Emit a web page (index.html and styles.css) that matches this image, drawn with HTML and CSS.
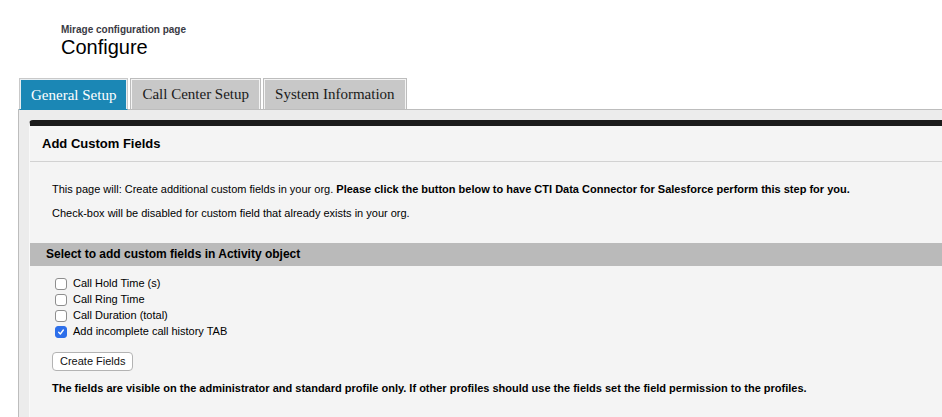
FILE: index.html
```html
<!DOCTYPE html>
<html lang="en">
<head>
<meta charset="utf-8">
<title>Configure</title>
<link rel="stylesheet" href="styles.css">
</head>
<body>
<header class="page-header">
  <div class="page-sub">Mirage configuration page</div>
  <h1 class="page-title">Configure</h1>
</header>
<nav class="tabs">
  <div class="tab tab-active">General Setup</div>
  <div class="tab">Call Center Setup</div>
  <div class="tab">System Information</div>
</nav>
<main class="panel">
  <section class="box">
    <h2 class="box-head">Add Custom Fields</h2>
    <div class="box-body">
      <p class="intro">This page will: Create additional custom fields in your org. <b>Please click the button below to have CTI Data Connector for Salesforce perform this step for you.</b></p>
      <p class="intro intro-2">Check-box will be disabled for custom field that already exists in your org.</p>
    </div>
    <h3 class="section-bar">Select to add custom fields in Activity object</h3>
    <div class="fields">
      <label class="field"><span class="cb"></span>Call Hold Time (s)</label>
      <label class="field"><span class="cb"></span>Call Ring Time</label>
      <label class="field"><span class="cb"></span>Call Duration (total)</label>
      <label class="field"><span class="cb cb-checked"><svg viewBox="0 0 12 12" width="12" height="12"><path d="M3.2 6.3 L5.2 8.4 L8.8 3.6" fill="none" stroke="#fff" stroke-width="1.6" stroke-linecap="round" stroke-linejoin="round"/></svg></span>Add incomplete call history TAB</label>
    </div>
    <div class="actions">
      <button class="btn" type="button">Create Fields</button>
      <p class="note">The fields are visible on the administrator and standard profile only. If other profiles should use the fields set the field permission to the profiles.</p>
    </div>
  </section>
</main>
</body>
</html>
```

FILE: styles.css
```css
html, body {
  margin: 0;
  padding: 0;
  background: #ffffff;
  overflow: hidden;
}

body {
  font-family: "Liberation Sans", Arial, Helvetica, sans-serif;
  font-size: 11px;
  color: #000;
  width: 942px;
  height: 417px;
}

.page-header {
  padding: 24px 0 0 61px;
}

.page-sub {
  font-size: 10px;
  font-weight: bold;
  line-height: 12px;
  color: #3a3a44;
}

.page-title {
  margin: 0;
  font-size: 20px;
  font-weight: normal;
  line-height: 22px;
  color: #000;
}

.tabs {
  display: flex;
  gap: 2px;
  margin-top: 20px;
  padding-left: 19px;
  height: 31px;
  position: relative;
  z-index: 1;
}

.tab {
  font-family: "Liberation Serif", "Times New Roman", serif;
  font-size: 15px;
  line-height: 31px;
  padding: 0 11px;
  height: 32px;
  box-sizing: border-box;
  border: 1px solid #bdbdbd;
  box-shadow: inset 1px 1px 0 #f4f4f4, inset -1px 0 0 #f4f4f4;
  background: #c8c8c8;
  color: #1a1a1a;
  white-space: nowrap;
}

.tab-active {
  background: #1b87b5;
  color: #ffffff;
  border-color: #c9c9c9;
  border-bottom-color: #1b87b5;
  box-shadow: inset 1px 1px 0 #e8eef2, inset -1px 0 0 #e8eef2;
  line-height: 32px;
}

.panel {
  margin-left: 18px;
  border-top: 1px solid #bdbdbd;
  border-left: 1px solid #bdbdbd;
  background: #ececec;
  padding: 10px 0 0 10px;
  height: 297px;
}

.box {
  background: #f4f4f4;
  border-top: 6px solid #1b1b1b;
  border-top-left-radius: 4px;
  border-left: 1px solid #f9f9f9;
  height: 291px;
}

.box-head {
  margin: 0;
  font-size: 13px;
  font-weight: bold;
  line-height: 35px;
  height: 35px;
  padding-left: 12px;
  border-bottom: 1px solid #d2d2d2;
}

.box-body {
  padding: 20px 0 0 22px;
}

.intro {
  margin: 0;
  line-height: 14px;
}

.intro-2 {
  margin-top: 10px;
}

.section-bar {
  margin: 23px 0 0 0;
  background: #bababa;
  font-size: 12px;
  font-weight: bold;
  line-height: 23px;
  height: 23px;
  padding-left: 16px;
}

.fields {
  display: flex;
  flex-direction: column;
  padding: 9px 0 0 25px;
}

.field {
  display: flex;
  align-items: center;
  gap: 6px;
  height: 16px;
  line-height: 16px;
}

.cb {
  display: inline-flex;
  align-items: center;
  justify-content: center;
  width: 12px;
  height: 12px;
  box-sizing: border-box;
  border: 1px solid #8e8e8e;
  border-radius: 3px;
  background: #ffffff;
  margin-top: 2px;
}

.cb-checked {
  background: #2d6fea;
  border-color: #2d6fea;
}

.cb-checked svg {
  display: block;
}

.actions {
  padding: 13px 0 0 22px;
}

.btn {
  font-family: "Liberation Sans", Arial, Helvetica, sans-serif;
  font-size: 11px;
  height: 19px;
  line-height: 17px;
  padding: 0 7px;
  background: #ffffff;
  border: 1px solid #b3b3b3;
  border-radius: 4px;
  color: #111;
  display: block;
}

.note {
  margin: 10px 0 0 0;
  font-weight: bold;
  line-height: 14px;
}
```
